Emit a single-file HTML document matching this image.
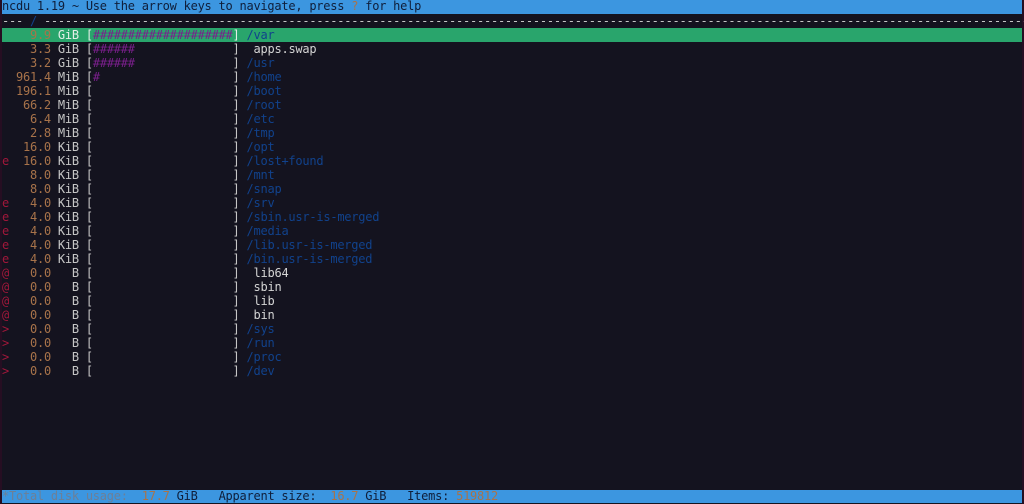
<!DOCTYPE html>
<html>
<head>
<meta charset="utf-8">
<style>
html,body{margin:0;padding:0;width:1024px;height:504px;overflow:hidden;background:#14131f;}
#b{position:absolute;left:0;top:0;width:1024px;height:504px;overflow:hidden;background:#14131f;filter:blur(0.3px);}
.edge{position:absolute;top:0;bottom:0;width:2px;background:#260e22;}
.bar{position:absolute;left:2px;width:1020px;height:14px;}
pre{position:absolute;left:2px;margin:0;font-family:"DejaVu Sans Mono","Liberation Mono",monospace;font-size:12px;letter-spacing:-0.24px;line-height:14px;height:14px;color:#c6c6c6;white-space:pre;}
.o{color:#a8734a}.p{color:#7a1f8c}.d{color:#11428c}.r{color:#a3173b}.w{color:#d4d4d4}
.k{color:#0f1e3a}.t{color:#6d7f96}.g{color:#e4efe8}
</style>
</head>
<body>
<div id="b">
<div class="edge" style="left:0"></div>
<div class="edge" style="right:0"></div>
<div class="bar" style="top:0;height:13.5px;background:#3c96e0"></div>
<div class="bar" style="top:28px;background:#29a56c"></div>
<div class="bar" style="top:489.5px;height:13.5px;background:#3c96e0"></div>

<pre style="top:-1px" class="k">ncdu 1.19 ~ Use the arrow keys to navigate, press <span class="o">?</span> for help</pre>
<pre style="top:14px">--- <span class="d">/</span> ---------------------------------------------------------------------------------------------------------------------------------------------</pre>
<pre style="top:28px" class="g">    <span class="o">9.9</span> GiB [<span class="p">####################</span>] <span class="d">/var</span></pre>
<pre style="top:42px">    <span class="o">3.3</span> GiB [<span class="p">######</span>              ]  <span class="w">apps.swap</span></pre>
<pre style="top:56px">    <span class="o">3.2</span> GiB [<span class="p">######</span>              ] <span class="d">/usr</span></pre>
<pre style="top:70px">  <span class="o">961.4</span> MiB [<span class="p">#</span>                   ] <span class="d">/home</span></pre>
<pre style="top:84px">  <span class="o">196.1</span> MiB [                    ] <span class="d">/boot</span></pre>
<pre style="top:98px">   <span class="o">66.2</span> MiB [                    ] <span class="d">/root</span></pre>
<pre style="top:112px">    <span class="o">6.4</span> MiB [                    ] <span class="d">/etc</span></pre>
<pre style="top:126px">    <span class="o">2.8</span> MiB [                    ] <span class="d">/tmp</span></pre>
<pre style="top:140px">   <span class="o">16.0</span> KiB [                    ] <span class="d">/opt</span></pre>
<pre style="top:154px"><span class="r">e</span>  <span class="o">16.0</span> KiB [                    ] <span class="d">/lost+found</span></pre>
<pre style="top:168px">    <span class="o">8.0</span> KiB [                    ] <span class="d">/mnt</span></pre>
<pre style="top:182px">    <span class="o">8.0</span> KiB [                    ] <span class="d">/snap</span></pre>
<pre style="top:196px"><span class="r">e</span>   <span class="o">4.0</span> KiB [                    ] <span class="d">/srv</span></pre>
<pre style="top:210px"><span class="r">e</span>   <span class="o">4.0</span> KiB [                    ] <span class="d">/sbin.usr-is-merged</span></pre>
<pre style="top:224px"><span class="r">e</span>   <span class="o">4.0</span> KiB [                    ] <span class="d">/media</span></pre>
<pre style="top:238px"><span class="r">e</span>   <span class="o">4.0</span> KiB [                    ] <span class="d">/lib.usr-is-merged</span></pre>
<pre style="top:252px"><span class="r">e</span>   <span class="o">4.0</span> KiB [                    ] <span class="d">/bin.usr-is-merged</span></pre>
<pre style="top:266px"><span class="r">@</span>   <span class="o">0.0</span>   B [                    ]  <span class="w">lib64</span></pre>
<pre style="top:280px"><span class="r">@</span>   <span class="o">0.0</span>   B [                    ]  <span class="w">sbin</span></pre>
<pre style="top:294px"><span class="r">@</span>   <span class="o">0.0</span>   B [                    ]  <span class="w">lib</span></pre>
<pre style="top:308px"><span class="r">@</span>   <span class="o">0.0</span>   B [                    ]  <span class="w">bin</span></pre>
<pre style="top:322px"><span class="r">&gt;</span>   <span class="o">0.0</span>   B [                    ] <span class="d">/sys</span></pre>
<pre style="top:336px"><span class="r">&gt;</span>   <span class="o">0.0</span>   B [                    ] <span class="d">/run</span></pre>
<pre style="top:350px"><span class="r">&gt;</span>   <span class="o">0.0</span>   B [                    ] <span class="d">/proc</span></pre>
<pre style="top:364px"><span class="r">&gt;</span>   <span class="o">0.0</span>   B [                    ] <span class="d">/dev</span></pre>
<pre style="top:489px" class="k"><span class="t">*Total disk usage:</span>  <span class="o">17.7</span> GiB   Apparent size:  <span class="o">16.7</span> GiB   Items: <span class="o">519812</span></pre>
</div>
</body>
</html>
